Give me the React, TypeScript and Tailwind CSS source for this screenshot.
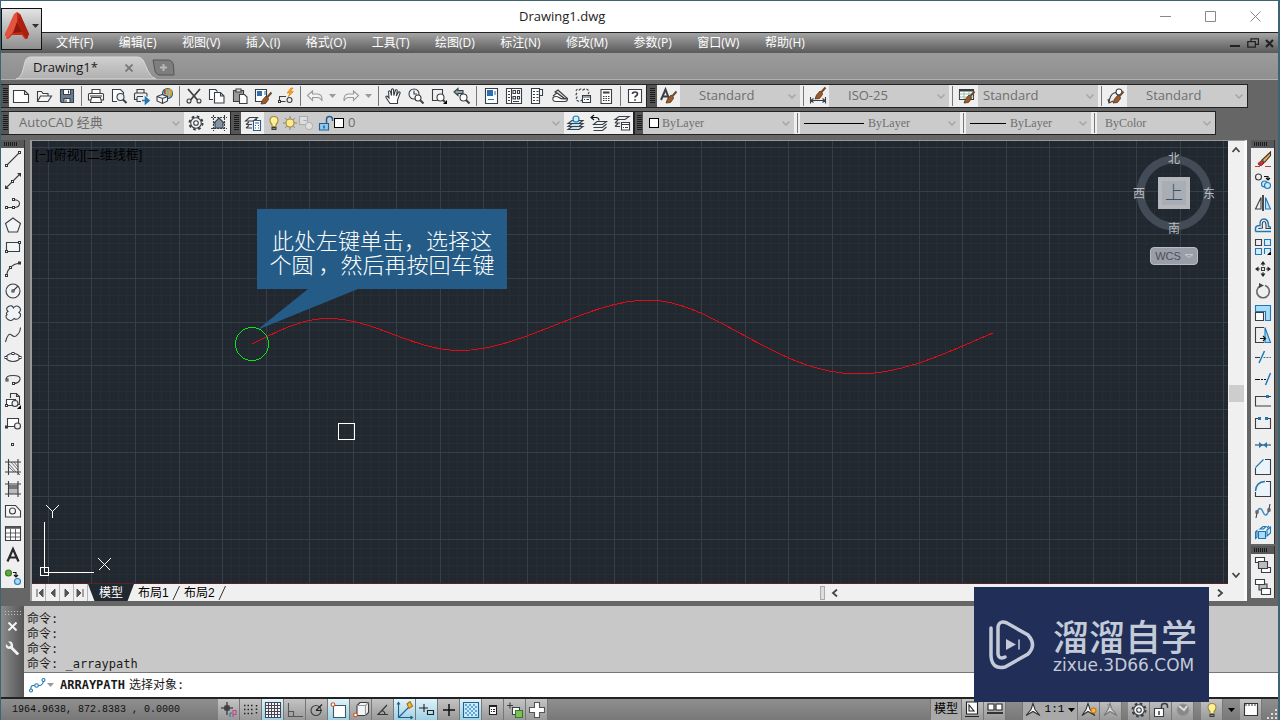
import type { ReactNode } from 'react'

const ui = "font-['Open_Sans','Noto_Sans_CJK_SC',sans-serif]"
const mono = "font-['Liberation_Mono','Noto_Sans_CJK_SC',monospace]"
const serif = "font-['Liberation_Serif','Noto_Sans_CJK_SC',serif]"

const BLUE = '#1f78b4'

// small square handle used on most of the draw icons
function Dot({ x, y, c = '#33373b' }: { x: number; y: number; c?: string }) {
  return <rect x={x - 1} y={y - 1} width="2" height="2" fill="#fff" stroke={c} strokeWidth="1" />
}

const brush = (
  <>
    <path d="M15.500 3.500l-4 4.500" stroke="#6b4a2c" strokeWidth="2" />
    <path d="M12 8.500l-2-1.500-3.500 4-1.500 4 4.500-.5 3-4z" fill="#9a5a2b" stroke="#5b3416" strokeWidth=".8" />
  </>
)

const icons: Record<string, ReactNode> = {
  // standard toolbar
  new: <path d="M.5 2.500h11l4 4v8H.5zM11.500 2.500v4h4" fill="#fff" />,
  open: <path d="M1.500 13V3.500h4l1.500 2h5v2.500M1.500 13.500l3-5.500h11l-3.500 5.500z" fill="#f6f6f6" />,
  save: (
    <>
      <path d="M1.500 1.500h13v13h-12l-1-1z" fill="#6b7c92" />
      <path d="M4.500 1.500h7v5h-7zM5 10.500h6v4H5z" fill="#fff" />
      <path d="M9.500 2.500v3M7 11.500v3" />
    </>
  ),
  print: (
    <>
      <path d="M4 5.500v-4h8v4M3.500 12h-3V6.500q0-1 1-1h13q1 0 1 1V12h-3" fill="#fff" />
      <path d="M3.500 9.500h9l1 5h-11z" fill="#fff" />
      <path d="M2 8h12" />
    </>
  ),
  preview: (
    <>
      <path d="M6 13.500H1.500v-12h8l3 3V6" fill="#fff" />
      <circle cx="9.500" cy="9" r="3.500" fill="#e9f1f6" />
      <path d="M12 11.500l3.500 3.500" strokeWidth="2" />
    </>
  ),
  publish: (
    <>
      <path d="M3 5V1.500h7V5M3 11.500H.5V6q0-1 1-1h10.500q1 0 1 1v2.500M3 8.500h6M3 9v4.500h4" />
      <path d="M8 12.500h6M11.500 9.500l3.500 3-3.500 3z" fill={BLUE} stroke={BLUE} strokeWidth="1.600" />
    </>
  ),
  globe: (
    <>
      <circle cx="10.500" cy="5.500" r="5" fill="#7cc2e8" stroke="#356" />
      <path d="M9 1q4 3 1 7M13 1q3 4 0 7" stroke="#d4a017" strokeWidth="1.800" />
      <path d="M8.500 2q-2 2 0 4" stroke="#c33" strokeWidth="1.500" />
      <path d="M0 8.500l5-2 5.500 2v4.500l-5 2.500L0 13z" fill="#f4f6f8" />
      <path d="M0 8.500l5.500 2 5-2M5.500 10.500v5" />
    </>
  ),
  cut: (
    <>
      <path d="M2 1l9.500 11M14 1L4.500 12" strokeWidth="1.800" />
      <circle cx="3" cy="13" r="2" />
      <circle cx="13" cy="13" r="2" />
    </>
  ),
  copy: (
    <>
      <path d="M4 11.500H.5V1.500h6l2 2" fill="#fff" />
      <path d="M5.500 4.500h6l3.500 3.500v7H5.500zM11.500 4.500v3.500H15" fill="#fff" />
    </>
  ),
  paste: (
    <>
      <path d="M1.500 2.500h10v11h-10z" fill="#9a9a9a" />
      <path d="M4 1h5v3H4z" fill="#ddd" />
      <path d="M7.500 6.500h5l2.500 2.500v6.500H7.500z" fill="#fff" />
    </>
  ),
  match: (
    <>
      <path d="M.5 1.500h11v12H.5z" fill="#fff" />
      <path d="M2 3h5v5H2z" fill="#2f6fae" stroke="none" />
      <path d="M9 4h2M9 6h2" stroke={BLUE} />
      <g transform="translate(1 1)">{brush}</g>
    </>
  ),
  block: (
    <>
      <path d="M1.500 13.500V8.500H8M1.500 13.500h6" />
      <circle cx="11.500" cy="12" r="2.500" />
      <Dot x={1.5} y={13.5} />
      <path d="M13 0l-4 5h3l-2 4 5.500-5.500h-3l2.500-3.500z" fill="#f6a01a" stroke="#e07c00" strokeWidth=".6" />
    </>
  ),
  undo: <path d="M.5 7.500l5-4.500v3h5q5 0 4.500 7-1.500-3.500-4.500-3.500h-5v3z" stroke="#9a9a9a" fill="#f4f4f4" />,
  redo: <path d="M15.500 7.500l-5-4.500v3h-5q-5 0-4.500 7 1.500-3.500 4.500-3.500h5v3z" stroke="#9a9a9a" fill="#f4f4f4" />,
  pan: (
    <path
      d="M5 15.500L1 9.500q-.5-1.500 1-1.500l2 2L3.500 3.500q1-1.500 2 0l1 4V1.500q1-1.200 2 0l.3 6L10.500 2q1.500-.8 1.800.5l-1 5.500L13.500 4q1.300-.5 1.700.7L12.500 12v3.500z"
      fill="#fff"
    />
  ),
  zoomrt: (
    <>
      <circle cx="6" cy="6" r="5" fill="#f2f6f8" />
      <path d="M6 2.500V6h3" />
      <circle cx="10" cy="10" r="3" fill="#fff" />
      <path d="M12.500 12.500l3 3" strokeWidth="2" />
    </>
  ),
  zoomwin: (
    <>
      <path d="M7 12.500H1.500v-11h10V6" />
      <circle cx="9.500" cy="9.500" r="3.500" fill="#fff" />
      <path d="M12 12l2 2" strokeWidth="2" />
      <path d="M16 12v4h-4z" fill="#000" stroke="none" />
    </>
  ),
  zoomprev: (
    <>
      <path d="M0 4l4-3.500v2h5v3H4v2z" fill="#8aa" />
      <circle cx="9.500" cy="9.500" r="3.500" fill="#fff" />
      <path d="M12 12l3.500 3.500" strokeWidth="2" />
    </>
  ),
  props: (
    <>
      <path d="M2.500.5h12v15h-12z" fill="#fff" />
      <path d="M4 2h6v6H4z" fill="#2f6fae" stroke="none" />
      <path d="M12 3v4M5 11.500h6" stroke={BLUE} />
    </>
  ),
  dcenter: (
    <>
      <path d="M.5.5h15v15H.5zM5.500.5v15" fill="#fff" />
      <path d="M2 3.500h2M2 6.500h2M2 9.500h2M2 12.500h2M7 2.500h2.500v3H7zM11.500 2.500h2v3h-2zM7 8.500h2.500v2.500H7zM11.500 8.500h2v2.500h-2zM7 13.500h6" />
    </>
  ),
  palettes: (
    <>
      <path d="M2.500.5h8v15h-8zM10.500 1.500h3v6h-3" fill="#fff" />
      <path d="M4 3.500h2M7.500 3.500h2M4 6.500h2M7.500 6.500h2M4 9.500h2M7.500 9.500h2M4 12.500h2M7.500 12.500h2" />
    </>
  ),
  sheet: (
    <>
      <path d="M3 4l3-2 9 8-2 1z" fill="#d8d8d8" />
      <path d="M1 8l4-3 8 6M1 9.500q3-2 6 0 3 2.500 8.500 1 0 3-2.500 3H4q-4 0-3-4z" fill="#fff" />
    </>
  ),
  markup: (
    <>
      <path d="M1 3q1-3 3-1 2-2 4 0 3-2 5 0 2 2 0 4M2 5q-2 2 0 4-2 3 1 4 2 1 4-1" strokeDasharray="2.500 1.500" />
      <path d="M7.500 7.500h8v7h-8z" fill="#fff" />
      <path d="M7.500 9h8M9 11.500h1M11.500 11.500h2.500" />
    </>
  ),
  calc: (
    <>
      <path d="M3 1.500h10.500v14H3z" fill="#fff" />
      <path d="M5 4.500h6.500" strokeWidth="2" />
      <path d="M5 8.500h1.500M7.500 8.500H9M10 8.500h1.500M5 10.500h1.500M7.500 10.500H9M10 10.500h1.500M5 12.500h1.500M7.500 12.500H9M10 12.500h1.500" />
    </>
  ),
  help: (
    <>
      <path d="M1.500 1.500h13v13h-13z" fill="#fff" />
      <path d="M5.500 6q0-2 2.500-2t2.500 2q0 1-1.500 2-1 .5-1 1.500M8 11.200v1.600" strokeWidth="1.700" />
    </>
  ),
  textstyle: (
    <>
      <path d="M0 12L4.500 1.500 8.500 12M2 8.500h5" strokeWidth="2" />
      {brush}
    </>
  ),
  dimstyle: (
    <>
      <path d="M.5 9v6.500M15.500 9v6.500M1 12.500h14M3.500 10.500l-2.500 2 2.500 2M12.500 10.500l2.500 2-2.500 2" />
      <g transform="translate(0 -4)">{brush}</g>
    </>
  ),
  tablestyle: (
    <>
      <path d="M.5 1.500h14v10H.5z" fill="#fff" />
      <path d="M1 2.500h13" strokeWidth="2" />
      <path d="M.5 6h14M.5 9h14M5 3v8M10 3v8" stroke="#7b9" strokeWidth=".8" />
      {brush}
    </>
  ),
  leaderstyle: (
    <>
      <path d="M1 14.500q1-8 5-9.500l4-1M0 11l1 4 4-2" />
      <circle cx="11" cy="4" r="3" fill="#fff" />
      {brush}
    </>
  ),
  gear: (
    <>
      <circle cx="8" cy="8" r="6.500" strokeWidth="2" strokeDasharray="2.600 2.500" />
      <circle cx="8" cy="8" r="5.300" fill="#f4f4f4" />
      <circle cx="8" cy="8" r="2.300" fill="#fff" />
    </>
  ),
  workspace: (
    <>
      <path d="M2.500 0v16M13.500 0v16M0 2.500h16M0 13.500h16" strokeDasharray="2 1" />
      <path d="M8 3l5 5h-1v5H4V8H3z" fill="#8294a4" />
    </>
  ),
  layers: (
    <>
      <path d="M4.500 2.500h8l-4 3.500h-8zM1 9.500l3-2.500M1 9.500h6M1 13l3-2.500M1 13h6M12 2.500l-1 3" fill="none" />
      <path d="M8.500 5.500h7v10h-7z" fill="#fff" stroke="#2d5c8a" />
      <path d="M10 8h4M10 10.500h1M13 10.500h1M10 13h1M13 13h1" stroke="#2d5c8a" />
    </>
  ),
  bulb: (
    <>
      <path d="M8 1.500q4 0 4 4 0 2-2 4v2H6v-2q-2-2-2-4 0-4 4-4z" fill="#fff19a" stroke="#9b8a3a" />
      <path d="M6 12.500h4v2H6z" fill="#888" />
    </>
  ),
  sun: (
    <>
      <path d="M8 1v14M1 8h14M3 3l10 10M13 3L3 13" stroke="#777" strokeWidth=".8" />
      <circle cx="8" cy="8" r="4" fill="#ffe98a" stroke="#a08a3a" />
    </>
  ),
  freeze: (
    <>
      <path d="M1.500 1.500h8v8h-8zM5.500 5.500h3" stroke="#aaa" fill="#ddd" />
      <circle cx="11" cy="11" r="3.500" stroke="#b5b5b5" fill="#e0e0e0" />
    </>
  ),
  lock: (
    <>
      <path d="M1.500 8.500h9v6.500h-9z" fill="#8ccaf0" stroke="#235f92" />
      <path d="M8.500 8V4.500q0-3 3-3t3 3V6M6 10.500v3" stroke="#235f92" strokeWidth="1.500" />
    </>
  ),
  laycurrent: (
    <>
      <path d="M4 5.500h11l-4 3H0zM4 8.500h11l-4 3H0zM4 11.500h11l-4 3H0z" fill="#bfe2f6" />
      <circle cx="8" cy="4" r="3" stroke={BLUE} fill="#d8eefa" />
    </>
  ),
  layprev: (
    <>
      <path d="M6 6.500h9.500l-4 3H2.500zM15.500 9l-4 3.500h-9M15.500 12l-4 3.500h-9" />
      <path d="M0 2.500h5q3 0 3 3M3 0L0 2.500 3 5" stroke="#111" />
    </>
  ),
  laystate: (
    <>
      <path d="M5 1.500h10l-4 3H1zM1 8l3-3M1 8h5M1 11.500l3-3M1 11.500h5" />
      <path d="M7.500 7.500h8v7.500h-8z" fill="#fff" />
      <path d="M7.500 9.500h8M9 12.500h1M11 12.500h3" />
    </>
  ),
  // draw toolbar
  line: (<><path d="M1.500 14.500l13-13" /><Dot x={1.5} y={14.5} /><Dot x={14.5} y={1.5} /></>),
  xline: (
    <>
      <path d="M1 15L15 1" />
      <path d="M0 16v-4l4 4zM16 0v4l-4-4z" fill="#33373b" stroke="none" />
      <Dot x={7.5} y={8.5} />
    </>
  ),
  pline: (<><path d="M1.500 12.500h8.500q4.500-.5 4.500-4t-6-4" /><Dot x={1.5} y={12.5} /><Dot x={8.5} y={12.5} /><Dot x={8.5} y={4.5} /></>),
  polygon: <path d="M8 1l7.500 5.500-3 8.500h-9l-3-8.500z" fill="#f2f5f7" />,
  rect: (<><path d="M1.500 3.500h13v9h-13z" fill="#f2f5f7" /><Dot x={1.5} y={12.5} /><Dot x={14.5} y={3.5} /></>),
  arc: (<><path d="M1.500 14.500Q3 4 14.500 2" /><Dot x={1.5} y={14.5} /><Dot x={5.5} y={6.5} /><Dot x={14.5} y={2} /></>),
  circle: (<><circle cx="8" cy="8" r="7" fill="#f2f5f7" /><path d="M8 8l5-5" /><Dot x={8} y={8} /></>),
  cloud: <path d="M3 6.500q-3-3 .5-5Q7-.5 8.500 3 11-.5 14 2t0 5.500q3 2 .5 5t-5.500 1q-2.500 3.500-6 1T2 9.500Q.5 8 3 6.500z" fill="#eef4f7" />,
  spline: <path d="M.5 15Q3 5 6.500 8t5.500 0Q15 6 15.500.5" />,
  ellipse: (<><ellipse cx="8" cy="8.500" rx="7" ry="4" fill="#f2f5f7" /><Dot x={1} y={8.5} /><Dot x={15} y={8.5} /><Dot x={8} y={4.5} /></>),
  elarc: (<><path d="M1.500 9Q0 4.500 8 4.500t7 4-7 4" /><Dot x={2} y={9} /><Dot x={8.5} y={12.5} /></>),
  insert: (
    <>
      <path d="M5.500 5V.5h6l3 3v8H12M11.500.5v3h3" />
      <path d="M1.500 6.500h9v6h-9z" fill="#fff" />
      <circle cx="10" cy="10.500" r="3" fill="#e8f0f4" />
      <Dot x={1.5} y={12.5} />
      <path d="M16 12v4h-4z" fill="#000" stroke="none" />
    </>
  ),
  mkblock: (<><path d="M2.500 3.500h11v8h-11z" fill="#fff" /><circle cx="12.500" cy="11" r="3" fill="#eee" /><Dot x={1.5} y={12} /></>),
  point: <Dot x={7.5} y={7.5} />,
  hatch: (<><path d="M3.500 0v16M13 0v16M0 3h16M0 13h16" /><path d="M4 5l7 8M4 8l5 5M6 3l7 8M9 3l4 5M15 16l-3-3" strokeWidth=".7" /></>),
  gradient: (
    <>
      <path d="M4 4h9v4H4z" fill="#777" stroke="none" />
      <path d="M4 8h9v5H4z" fill="#bbb" stroke="none" />
      <path d="M3.500 0v16M13 0v16M0 3h16M0 13h16" />
    </>
  ),
  region: (<><path d="M.5 2.500h10l5 5.500v6H.5z" fill="#f6f6f6" /><circle cx="7.500" cy="8" r="3" /></>),
  table: (
    <>
      <path d="M.5 1.500h15v14H.5z" fill="#fff" />
      <path d="M1 2.500h14" stroke="#555" strokeWidth="2.500" />
      <path d="M.5 8h15M.5 12h15M5.500 4v11.500M10.500 4v11.500" strokeWidth=".8" />
    </>
  ),
  mtext: <path d="M2.500 14.500L8 2l5.500 12.500M4.500 10.500h7" strokeWidth="2.200" stroke="#26292c" />,
  addsel: (
    <>
      <circle cx="3.500" cy="4" r="3" fill="#5fa83c" stroke="#3c7a22" />
      <circle cx="12.500" cy="12.500" r="3" fill="#a8dbf8" stroke="#2b7db8" />
      <path d="M8 3.500h3v4M9 6l2 2 2-2" stroke="#111" />
    </>
  ),
  // modify toolbar
  erase: (
    <>
      <path d="M0 15.500h5M10 15.500h6" stroke="#c33" />
      <path d="M15.500 1L7 9l2.500 2.500 6-7z" fill="#d9b36a" stroke="#4a3013" />
      <path d="M7 9l2.500 2.500L6 14z" fill="#fff" stroke="#555" strokeWidth=".8" />
      <path d="M6.500 9.500l2.500 2.500-2.500 2.500q-3 .5-3.500-2z" fill="#c33" stroke="#711" strokeWidth=".8" />
    </>
  ),
  mcopy: (
    <>
      <circle cx="3.500" cy="4" r="3" />
      <path d="M9 3.500h4v3M11 5l2 2 2-2" stroke="#111" />
      <circle cx="9.500" cy="11" r="3" stroke={BLUE} fill="#cfe9f8" />
      <circle cx="12.500" cy="12.500" r="3" stroke={BLUE} fill="#cfe9f8" />
    </>
  ),
  mirror: (<><path d="M6 2.500V14H.5z" /><path d="M8 0v16" strokeWidth="1.500" stroke="#111" /><path d="M10.500 2.500V14H15.500z" stroke={BLUE} fill="#bfe2f6" /></>),
  offset: (
    <>
      <path d="M.5 14.500v-3q0-3 4.500-3Q4.500 2 9 2t4.500 7.500l2.500 1M.5 14.500H16" stroke={BLUE} strokeWidth="1.500" />
      <path d="M3.500 12q0-1 4-1Q6.500 4.500 9 4.500t2 7H16" />
    </>
  ),
  array: (
    <>
      <path d="M.5.500h6v6h-6z" />
      <path d="M9.500.500h6v6h-6zM.500 9.500h6v6h-6zM9.500 15V9.500h6V12" stroke={BLUE} fill="#d4ecf9" />
      <path d="M16 12v4h-4z" fill="#000" stroke="none" />
    </>
  ),
  move: (
    <>
      <path d="M6.500 6.500h3v3h-3z" />
      <path d="M8 0l2.500 3.500h-5zM8 16l2.500-3.500h-5zM0 8l3.500-2.500v5zM16 8l-3.500-2.500v5z" fill="#222" stroke="none" />
      <path d="M8 3v2M8 11v2M3 8h2M11 8h2" />
    </>
  ),
  rotate: (<><path d="M10 2.500a6.300 6.300 0 1 1-5 .5" stroke="#666" strokeWidth="1.600" /><path d="M4 0l5 2.500L4 5z" fill="#444" stroke="none" /></>),
  scale: (<><path d="M.5.500h15v15h-5V6.500H.500z" fill="#a8dcf6" stroke={BLUE} /><path d="M.5 7.500h8v8h-8z" fill="#fff" /></>),
  stretch: (
    <>
      <path d="M9 .500H.500v15H9" />
      <path d="M10 .500l5.500 15H10z" fill="#a8dcf6" stroke={BLUE} />
      <path d="M5 11.500h5M8 9l2.500 2.500L8 14" stroke="#111" />
    </>
  ),
  trim: (<><path d="M0 8.500h5" /><path d="M4 14L9.500 2" stroke={BLUE} strokeWidth="1.500" /><path d="M8.500 8.500H16" strokeDasharray="2 1" stroke={BLUE} /></>),
  extend: (<><path d="M0 8.500h5M6 8.500h2M9 8.500h2" stroke="#111" /><path d="M10.500 14l5-12" stroke={BLUE} strokeWidth="1.500" /></>),
  breakpt: (<><path d="M11 3.500H.5v9.500H16M14 3.500h2" /><path d="M11 2h3v3h-3z" fill={BLUE} stroke="none" /></>),
  breakit: (<><path d="M3 3.500H.5v10h15v-10H13" /><path d="M3 2h3v3H3zM10 2h3v3h-3z" fill={BLUE} stroke="none" /></>),
  join: (<><path d="M0 8h16" /><path d="M4 5l4 3-4 3zM12 5L8 8l4 3z" fill={BLUE} stroke="none" /></>),
  chamfer: (<><path d="M10 .500h5.500v15H.500V9" fill="#eaf4fa" /><path d="M.500 8.500l8-8" stroke={BLUE} /></>),
  fillet: (<><path d="M11 .500h4.500v15H.500V11" fill="#eaf4fa" /><path d="M.500 10Q1 1 10 .500" stroke={BLUE} strokeWidth="1.500" /></>),
  blend: (<><path d="M1 15l1-5M15 1l-1 5" /><path d="M2 9q3-7 6 0t6-2" stroke="#3f8cc4" strokeWidth="1.500" /><Dot x={2} y={9} /><Dot x={14} y={7} /></>),
  explode: (
    <>
      <path d="M3.500 6.500h7v7h-7z" fill="#a8dcf6" stroke={BLUE} />
      <path d="M5 4l3-2.500h3L8.500 4zM12 5l3.500-3v6L12 11zM.500 7v6.500L2 12V5.500zM12 3l2-2" fill="#d4ecf9" stroke={BLUE} />
    </>
  ),
  front: (<><path d="M.500 .500h9v5h-9zM6.500 10.500h9v5h-9z" fill="#fff" /><path d="M3.500 4.500h9v7h-9z" fill="#bcbcbc" /></>),
  back: (<><path d="M4 5h8v6H4z" fill="#bcbcbc" /><path d="M.500 .500h9v5h-9zM6.500 9.500h9v6h-9z" fill="#fff" /></>),
  // status bar
  infer: (<><path d="M0 6h12M6 0v13M4 4h4v4H4z" stroke="#222" /><path d="M12 8.500h3v4h-3zM12 12v3" stroke="#c2457c" /><path d="M9 11v4M9 11h2" stroke={BLUE} /></>),
  snap: <path d="M1 3.500h10M1 7.500h10M1 11.500h10M13.500 3v10" strokeDasharray="1.500 2" stroke="#222" strokeWidth="1.500" />,
  grid: <path d="M.500.500h15v15H.500zM3.500.500v15M6.500.500v15M9.500.500v15M12.500.500v15M.500 3.500h15M.500 6.500h15M.500 9.500h15M.500 12.500h15" stroke="#445" fill="#fff" />,
  ortho: <path d="M1.500 1v13.500H16M1.500 9.500h5v5" stroke="#555" />,
  polar: (<><circle cx="7" cy="8.500" r="5" /><path d="M7 8.500h6M7 8.500l6-6" stroke="#222" /></>),
  osnap: (<><path d="M2.500 3.500h12v12h-12z" fill="#fff" stroke="#456" /><circle cx="2" cy="2.500" r="1.800" fill="#fff" stroke="#d9531e" /></>),
  osnap3d: (<><path d="M4 3.500L7 .500h8.500v10l-3 3H4z" fill="#f4f4f4" /><path d="M12.500 3.500v10M4 3.500h8.500l3-3" stroke="#999" /><circle cx="2.500" cy="13" r="1.800" fill="#fff" stroke="#d9531e" /></>),
  otrack: <path d="M12 3L3 12.500h10M7 8.500q3 1 3 4" stroke="#333" />,
  ducs: (<><path d="M1.500 0v15.500H16M2 15L12 5M0 2.500l1.500-2 1.500 2M13.500 14l2 1.500-2 1.500" stroke="#1f5f8a" /><path d="M10 2l3-2.500 2.500 4.500-3.500 2.500z" fill="#f3b53c" stroke="#a67314" /></>),
  dyn: <path d="M0 6h9M5 2v8M8.500 8.500h6v4h-6z" stroke="#222" />,
  lwt: <path d="M2 8h12M8 2v12" stroke="#111" strokeWidth="1.500" />,
  tpy: (<><path d="M.500.500h15v15H.500z" fill="#cfeaf8" stroke="#235f92" /><path d="M2 3h12M2 7h12M2 11h12" stroke="#5fa9dc" strokeWidth="2" strokeDasharray="2 2" /><path d="M4 5h10M4 9h10M4 13h10" stroke="#5fa9dc" strokeWidth="2" strokeDasharray="2 2" /></>),
  qp: (<><path d="M4.500 3.500h7v9h-7z" fill="#fff" stroke="#222" /><path d="M4.500 4.500h7M6 7.500h1M8 7.500h2M6 9.500h1M8 9.500h2" stroke="#222" /></>),
  sc: (<><path d="M0 3.500h6M3 .500v6" /><path d="M5.500 5.500h7v7h-7z" fill="#fff" /><path d="M8.500 8.500h7v7h-7z" fill="#7cc05c" stroke="#3c7a22" /></>),
  am: <path d="M5.500.500h5v5h5v5h-5v5h-5v-5h-5v-5h5z" fill="#fff" stroke="#555" />,
  modelspace: (<><path d="M1.500 0h11v12h-11z" fill="#fff" stroke="#222" /><path d="M4 3v6h5zM0 14.500h14" stroke="#222" /></>),
  layoutspace: (<><path d="M1 2h6v6H1zM9 2h6v6H9z" fill="#fff" stroke="#222" /><path d="M0 11h16" stroke="#333" strokeWidth="2" /></>),
  anno: <path d="M8 1.500l2 6 5 6-7-4-7 4 5-6z" fill="#fff" stroke="#333" />,
  annovis: (<><path d="M7 1.500l2 6 5 6-7-4-6 4 4-6z" fill="#fff" stroke="#333" /><circle cx="12.500" cy="8.500" r="2.500" fill="#ffb347" stroke="#c97a10" /></>),
  annoauto: (<><path d="M7 1.500l2 6 5 6-7-4-6 4 4-6z" fill="#ddd" stroke="#777" /><path d="M4 2l9 9" stroke="#999" /></>),
  unlock: (<><path d="M1.500 6.500h9v8h-9z" fill="#fff" /><path d="M8.500 6V4q0-2.500 3-2.500t3 2.500v2M6 9v4" strokeWidth="1.500" /></>),
  hw: (<><circle cx="8" cy="8" r="6" fill="#888" stroke="#999" /><path d="M4 4l5 4 3-4" stroke="#ddd" strokeWidth="2" /></>),
  clean: (<><path d="M1.500 1.500h13v12h-13z" fill="#fff" stroke="#333" /><path d="M2 3h12" stroke="#333" strokeDasharray="2 1" /></>),
  wrench: <path d="M3 1.500L5.500 4v2L3.500 6.500 1 4q-1 4 2.500 5l2-.3 6 6q2 1 2.500-1.500l-6-6Q8.500 3 6 1.500z" fill="#f2f2f2" stroke="none" transform="translate(0 -1)" />,
  arraypath: (
    <>
      <path d="M2 14q-1-6 3-5.500t5 0q4 0 4.500-5" stroke={BLUE} />
      <circle cx="2" cy="13.500" r="1.500" fill="#fff" stroke={BLUE} />
      <circle cx="7.500" cy="8.500" r="1.800" fill="#fff" stroke={BLUE} />
      <circle cx="14.500" cy="3" r="1.500" fill="#fff" stroke={BLUE} />
    </>
  ),
}

function Icon({ name }: { name: string }) {
  return (
    <svg viewBox="0 0 16 16" className="h-4 w-4 shrink-0 overflow-visible" fill="none" stroke="#3a3f45" strokeWidth="1.100">
      {icons[name]}
    </svg>
  )
}

function ToolButton({ name }: { name: string }) {
  return (
    <button aria-label={name} className="flex h-[22px] w-[23px] shrink-0 items-center justify-center bg-[#efefef]">
      <Icon name={name} />
    </button>
  )
}

function Caret({ className = 'text-[#999]' }: { className?: string }) {
  return (
    <svg viewBox="0 0 7 4" className={`h-1 w-[7px] shrink-0 ${className}`}>
      <path d="M0 0h7L3.500 4z" fill="currentColor" />
    </svg>
  )
}

function Sep() {
  return (
    <div className="flex h-[22px] w-[6px] shrink-0 justify-center bg-[#efefef] py-px">
      <div className="w-px bg-[#777]" />
    </div>
  )
}

function Grip({ className = 'w-2' }: { className?: string }) {
  return (
    <div className={`flex h-[22px] shrink-0 items-center justify-center bg-[#555] ${className}`}>
      <div className="h-4 w-[5px] bg-[linear-gradient(#1a1a1a_50%,transparent_50%)] bg-[length:2px_2px]" />
    </div>
  )
}

function TopGrip() {
  return (
    <div className="flex h-2 items-center bg-[#585858] px-[3px]">
      <div className="h-1 w-3.5 bg-[linear-gradient(90deg,#1a1a1a_50%,transparent_50%)] bg-[length:2px_2px]" />
    </div>
  )
}

interface ComboProps {
  label: string
  value: string
  className: string
  pad?: string
  font?: string
  children?: ReactNode
}

function Combo({ label, value, className, pad = 'pl-2', font = `${ui} text-[13px]`, children }: ComboProps) {
  return (
    <div className={`relative flex h-[22px] shrink-0 items-center bg-[#cbcbcb] ${pad} ${className}`}>
      {children}
      <select aria-label={label} className={`h-full min-w-0 flex-1 appearance-none bg-transparent text-[#6e6e6e] outline-none ${font}`}>
        <option>{value}</option>
      </select>
      <svg viewBox="0 0 8 5" className="pointer-events-none absolute right-1 h-[5px] w-2" fill="none" stroke="#a6a6a6" strokeWidth="1.500">
        <path d="M.5.500L4 4 7.500.500" />
      </svg>
    </div>
  )
}

const menus = ['文件(F)', '编辑(E)', '视图(V)', '插入(I)', '格式(O)', '工具(T)', '绘图(D)', '标注(N)', '修改(M)', '参数(P)', '窗口(W)', '帮助(H)']

const standard = [
  ['new', 'open', 'save'],
  ['print', 'preview', 'publish', 'globe'],
  ['cut', 'copy', 'paste', 'match', 'block'],
  ['undo', 'v', 'redo', 'v'],
  ['pan', 'zoomrt', 'zoomwin', 'zoomprev'],
  ['props', 'dcenter', 'palettes', 'sheet', 'markup', 'calc'],
  ['help'],
]

const styles = [
  { icon: 'textstyle', value: 'Standard', pad: 'pl-[19px]' },
  { icon: 'dimstyle', value: 'ISO-25', pad: 'pl-[19px]' },
  { icon: 'tablestyle', value: 'Standard', pad: 'pl-[5px]' },
  { icon: 'leaderstyle', value: 'Standard', pad: 'pl-[19px]' },
]

const drawTools = ['line', 'xline', 'pline', 'polygon', 'rect', 'arc', 'circle', 'cloud', 'spline', 'ellipse', 'elarc', 'insert', 'mkblock', 'point', 'hatch', 'gradient', 'region', 'table', 'mtext', 'addsel']
const modifyTools = ['erase', 'mcopy', 'mirror', 'offset', 'array', 'move', 'rotate', 'scale', 'stretch', 'trim', 'extend', 'breakpt', 'breakit', 'join', 'chamfer', 'fillet', 'blend', 'explode']

const modes = ['infer', 'snap', 'grid', 'ortho', 'polar', 'osnap', 'osnap3d', 'otrack', 'ducs', 'dyn', 'lwt', 'tpy', 'qp', 'sc', 'am']
const activeModes = ['grid', 'osnap', 'ducs', 'dyn', 'tpy']

const history = ['命令:', '命令:', '命令:', '命令: _arraypath']

function TitleBar() {
  return (
    <header className="relative flex h-8 shrink-0 items-center border-t border-[#3d6472] bg-white">
      <h1 className={`flex-1 pl-[518px] text-[13px] text-[#222] ${ui}`}>Drawing1.dwg</h1>
      <div className="flex text-[#888]">
        <button aria-label="Minimize" className="flex w-[45px] items-center justify-center">
          <svg viewBox="0 0 11 11" className="h-[11px] w-[11px]" stroke="currentColor"><path d="M0 5.500h11" /></svg>
        </button>
        <button aria-label="Maximize" className="flex w-[45px] items-center justify-center">
          <svg viewBox="0 0 11 11" className="h-[11px] w-[11px]" stroke="currentColor" fill="none"><path d="M.500.500h10v10H.500z" /></svg>
        </button>
        <button aria-label="Close" className="flex w-[45px] items-center justify-center">
          <svg viewBox="0 0 11 11" className="h-[11px] w-[11px]" stroke="currentColor"><path d="M.500.500l10 10M10.500.500l-10 10" /></svg>
        </button>
      </div>
      <button aria-label="Application menu" className="absolute top-[7px] left-0 z-10 flex h-[42px] w-[41px] items-start justify-center gap-0.5 border border-[#111] bg-linear-to-b from-[#e4e4e4] to-[#8f8f8f] pt-[3px]">
        <svg viewBox="0 0 26 28" className="h-7 w-[26px]">
          <path d="M13 0l3 2 9 20-2 5h-2l-3-4H8l-4 4H3l-2-5z" fill="#c32a16" />
          <path d="M13 0l-3 2L1 22l2 5 7-8 3-9z" fill="#e4543c" />
          <path d="M13 10l5 10-9 1z" fill="#8f170b" />
          <path d="M16 2l9 20-2 5-5-7-4-11z" fill="#a9200f" />
        </svg>
        <span className="flex h-7 items-center"><Caret className="text-[#333]" /></span>
      </button>
    </header>
  )
}

function MenuBar() {
  return (
    <nav className={`flex h-[21px] shrink-0 items-center border-t border-[#222] bg-linear-to-b from-[#a5a5a5] to-[#5a5a5a] pr-1 pl-[55px] text-xs text-white ${ui}`}>
      <div className="flex w-[749px] justify-between">
        {menus.map((m) => (
          <a key={m} href="#" className="leading-5 whitespace-nowrap">{m}</a>
        ))}
      </div>
      <div className="ml-auto flex items-center gap-1.5">
        <button aria-label="Minimize drawing">
          <svg viewBox="0 0 11 10" className="h-2.5 w-[11px]" stroke="#222" strokeWidth="2"><path d="M0 8h10" /></svg>
        </button>
        <button aria-label="Restore drawing">
          <svg viewBox="0 0 12 10" className="h-2.5 w-3" stroke="#222" fill="none" strokeWidth="1.300"><path d="M4 3V.800h7.500v5.500H8.500M.800 3.700h7.500v5.500H.800z" /></svg>
        </button>
        <button aria-label="Close drawing">
          <svg viewBox="0 0 9 9" className="h-[9px] w-[9px]" stroke="#222" strokeWidth="2.200"><path d="M1 1l7 7M8 1L1 8" /></svg>
        </button>
      </div>
    </nav>
  )
}

function FileTabs() {
  return (
    <div className="flex h-[27px] shrink-0 items-end border-b border-[#b0b0b0] bg-linear-to-b from-[#9b9b9b] to-[#8f8f8f] pl-[15px]">
      <div className="relative flex h-[23px] w-36 items-center">
        <svg viewBox="0 0 144 23" className="absolute inset-0 h-full w-full">
          <defs>
            <linearGradient id="tab" x1="0" y1="0" x2="0" y2="1">
              <stop offset="0" stopColor="#cfcfcf" />
              <stop offset="1" stopColor="#b0b0b0" />
            </linearGradient>
          </defs>
          <path d="M0 23q5-1 7-9l2-8q1-5 6-5h106q5 0 7 5l4 9q3 7 8 8z" fill="url(#tab)" stroke="#d8d8d8" />
        </svg>
        <button className={`relative flex-1 pl-[17px] text-left text-[13px] text-[#1a1a1a] ${ui}`}>Drawing1*</button>
        <button aria-label="Close tab" className="relative mr-[27px]">
          <svg viewBox="0 0 8 8" className="h-2 w-2" stroke="#777" strokeWidth="1.800"><path d="M.500.500l7 7M7.500.500l-7 7" /></svg>
        </button>
      </div>
      <button aria-label="New tab" className="mb-[3px] -ml-2">
        <svg viewBox="0 0 23 17" className="h-[17px] w-[23px]">
          <path d="M1 1h15q5 0 5.500 6l.5 9H8Q3 16 2.500 9z" fill="#7e7e7e" stroke="#555" />
          <path d="M11.500 5v7M8 8.500h7" stroke="#b8b8b8" strokeWidth="2" />
        </svg>
      </button>
    </div>
  )
}

function Toolbars() {
  return (
    <div className="flex shrink-0 flex-col gap-[3px] bg-[#666] pt-1 pb-[5px]">
      <div className="flex">
        <div className="flex border-y border-[#222]">
          <Grip />
          {standard.map((group, gi) => (
            <div key={gi} className="flex">
              {gi > 0 && <Sep />}
              {group.map((name, i) =>
                name === 'v' ? (
                  <button key={i} aria-label="More" className="flex h-[22px] w-[13px] items-center justify-center bg-[#efefef]">
                    <Caret />
                  </button>
                ) : (
                  <ToolButton key={name} name={name} />
                ),
              )}
            </div>
          ))}
        </div>
        <div className="flex border border-[#222]">
          <Grip className="w-2.5" />
          {styles.map((s, i) => (
            <div key={s.icon} className="flex">
              {i > 0 && <Sep />}
              <ToolButton name={s.icon} />
              <Combo label={s.icon} value={s.value} className="w-[120px]" pad={s.pad} />
            </div>
          ))}
        </div>
      </div>
      <div className="flex">
        <div className="flex border-y border-[#222]">
          <Grip />
          <Combo label="Workspace" value="AutoCAD 经典" className="w-[175px]" pad="pl-2.5" />
          <ToolButton name="gear" />
          <ToolButton name="workspace" />
        </div>
        <div className="flex border border-[#222]">
          <Grip className="w-2.5" />
          <ToolButton name="layers" />
          <Combo label="Layer" value="0" className="w-[300px]" pad="pl-0.5">
            <Icon name="bulb" />
            <Icon name="sun" />
            <Icon name="freeze" />
            <span className="w-1" />
            <Icon name="lock" />
            <span className="mr-1 h-2.5 w-2.5 border border-black bg-white" />
          </Combo>
          <ToolButton name="laycurrent" />
          <ToolButton name="layprev" />
          <ToolButton name="laystate" />
        </div>
        <div className="flex border border-[#222]">
          <Grip />
          <Combo label="Color" value="ByLayer" className="w-[151px]" pad="pl-1.5" font={`${serif} text-xs`}>
            <span className="mr-[3px] h-2.5 w-2.5 border border-black bg-white" />
          </Combo>
          <Sep />
          <Combo label="Linetype" value="ByLayer" className="w-40" pad="pl-1" font={`${serif} text-xs`}>
            <span className="mr-1 h-px w-[60px] bg-black" />
          </Combo>
          <Sep />
          <Combo label="Lineweight" value="ByLayer" className="w-[125px]" pad="pl-1" font={`${serif} text-xs`}>
            <span className="mr-1 h-px w-9 bg-black" />
          </Combo>
          <Sep />
          <Combo label="Plot style" value="ByColor" className="w-[118px]" font={`${serif} text-xs`} />
        </div>
      </div>
    </div>
  )
}

function gridPath(step: number, w: number, h: number) {
  let d = ''
  const x0 = 16.4 % step
  const y0 = 50.4 % step
  for (let x = x0; x < w; x += step) d += `M${Math.floor(x) + 0.5} 0V${h}`
  for (let y = y0; y < h; y += step) d += `M0 ${Math.floor(y) + 0.5}H${w}`
  return d
}

function Drawing() {
  return (
    <div className="relative min-w-0 flex-1 overflow-hidden border-b border-[#5b2228] bg-[#212830]">
      <svg className="absolute inset-0 h-full w-full" fill="none" shapeRendering="crispEdges">
        <path d={gridPath(8.708, 2560, 1440)} stroke="#262d35" />
        <path d={gridPath(43.54, 2560, 1440)} stroke="#363f48" />
        <g transform="translate(-32 -141)">
          <path
            d="M252 344C280 330 302 318.500 328 318.500C375 318.500 412 350.500 460 350.500C522 350.500 588 300 648 300C715 300 775 374 858 374C905 374 950 351 993 333"
            stroke="#e00b14"
          />
          <circle cx="252" cy="344" r="16.500" stroke="#12e01c" />
          <path d="M338.500 423.500h16v16h-16z" stroke="#fff" />
          <g stroke="#fff">
            <path d="M40.500 567.500h8v8h-8zM44.500 522v50M44 572.500h50" />
            <path d="M46.500 505.500l6 6 6-6M52.500 511v7M98.500 558.500l12 12M110.500 558.500l-12 12" />
          </g>
        </g>
      </svg>

      <p className="absolute top-[6px] left-[3px] font-['Liberation_Sans','Noto_Sans_CJK_SC',sans-serif] text-[13px] leading-4 text-black">[−][俯视][二维线框]</p>

      <div className="absolute top-[68px] left-[225px] text-white">
        <p className="h-20 w-[250px] bg-[#245c87] pt-[18px] text-center font-['Noto_Sans_CJK_SC',sans-serif] text-[22px] leading-6 font-light whitespace-pre-line">
          {'此处左键单击，选择这\n个圆 ，然后再按回车键'}
        </p>
        <svg viewBox="0 0 250 41" className="h-[41px] w-[250px]">
          <path d="M51 0h50L0 41z" fill="#245c87" />
        </svg>
      </div>

      <div className="absolute top-[9px] right-4 flex w-[76px] flex-col items-center">
        <svg viewBox="0 0 76 86" className="h-[86px] w-[76px] overflow-visible font-['Noto_Sans_CJK_SC',sans-serif]">
          <circle cx="38" cy="43" r="33.500" fill="none" stroke="#434b56" strokeWidth="8" />
          <path d="M22 27h32v32H22z" fill="#b4b8bc" />
          <path d="M26 31h24v24H26z" fill="#a9aeb4" />
          <g fontSize="12" fill="#b9bdc2" textAnchor="middle">
            <text x="38" y="13">北</text>
            <text x="38" y="83">南</text>
            <text x="3" y="48">西</text>
            <text x="73" y="48">东</text>
            <text x="38" y="49" fontSize="18" fontWeight="300" fill="#3c536c">上</text>
          </g>
        </svg>
        <button className="mt-[11px] flex h-[18px] w-12 items-center justify-center gap-1 rounded border border-[#b9bcc6] bg-[#9a9ea9] font-['Liberation_Sans',sans-serif] text-[11px] text-[#4a4e5a]">
          WCS
          <svg viewBox="0 0 8 4" className="h-1 w-2" fill="none" stroke="#c4c7cf"><path d="M0 .500h8L4 3.500z" /></svg>
        </button>
      </div>
    </div>
  )
}

function Chevron({ d }: { d: string }) {
  return (
    <svg viewBox="0 0 8 8" className="h-2 w-2" fill="none" stroke="#444" strokeWidth="1.800"><path d={d} /></svg>
  )
}

function VScroll() {
  return (
    <div className="flex w-4 shrink-0 flex-col items-center justify-between bg-[#f0f0f0] py-[5px]">
      <button aria-label="Scroll up"><Chevron d="M.500 6L4 2l3.500 4" /></button>
      <div className="mt-[62px] h-[17px] w-[15px] bg-[#cdcdcd]" />
      <button aria-label="Scroll down"><Chevron d="M.500 2L4 6l3.500-4" /></button>
    </div>
  )
}

function LayoutTabs() {
  return (
    <div className="flex h-[17px] shrink-0 items-stretch bg-[#f0f0f0] font-['Liberation_Sans','Noto_Sans_CJK_SC',sans-serif] text-xs">
      <div className="flex">
        {['M3 1v8M9 1L5 5l4 4z', 'M7 1L3 5l4 4z', 'M3 1l4 4-4 4z', 'M7 1v8M1 1l4 4-4 4z'].map((d) => (
          <button key={d} aria-label="Browse layouts" className="flex w-3.5 items-center justify-center border-r border-[#b5b5b5]">
            <svg viewBox="0 0 10 10" className="h-2.5 w-2.5" fill="#555" stroke="#555"><path d={d} /></svg>
          </button>
        ))}
      </div>
      <button className="w-[46px] bg-[#212830] leading-4 text-white [clip-path:polygon(0_0,100%_0,86%_100%,14%_100%)]">模型</button>
      {['布局1', '布局2'].map((t) => (
        <button key={t} className="flex w-[46px] items-center justify-between pl-1 leading-4 text-black">
          {t}
          <svg viewBox="0 0 8 14" className="h-3.5 w-2" stroke="#333"><path d="M7.500 0L1 14" /></svg>
        </button>
      ))}
      <div className="ml-auto flex w-[35%] items-center">
        <div className="h-3.5 w-[5px] border border-[#aaa] bg-[#ddd]" />
        <button aria-label="Scroll left" className="ml-1.5"><Chevron d="M6 .500L2 4l4 3.500" /></button>
        <button aria-label="Scroll right" className="mr-5 ml-auto"><Chevron d="M2 .500L6 4 2 7.500" /></button>
      </div>
    </div>
  )
}

function SideBar({ tools }: { tools: string[] }) {
  return (
    <div className="flex flex-col border-r border-[#333] bg-[#efefef]">
      <TopGrip />
      {tools.map((t) => (
        <ToolButton key={t} name={t} />
      ))}
    </div>
  )
}

function CommandLine() {
  return (
    <section className="flex h-[91px] shrink-0">
      <div className="flex w-[23px] shrink-0 flex-col items-center bg-linear-to-r from-[#8c8c8c] to-[#555] pt-1">
        <div className="h-1.5 w-[17px] bg-[radial-gradient(#c4c4c4_40%,transparent_45%)] bg-[length:3px_3px]" />
        <button aria-label="Close command line" className="mt-1.5">
          <svg viewBox="0 0 9 9" className="h-[9px] w-[9px]" stroke="#f4f4f4" strokeWidth="2"><path d="M.500.500l8 8M8.500.500l-8 8" /></svg>
        </button>
        <button aria-label="Customize" className="mt-2.5"><Icon name="wrench" /></button>
      </div>
      <div className="flex min-w-0 flex-1 flex-col font-['DejaVu_Sans_Mono','Noto_Sans_CJK_SC',monospace] text-xs text-[#1a1a1a]">
        <div className="flex-1 border-b border-[#777] bg-[#c8c8c8] pt-1.5 pl-[3px]">
          {history.map((h, i) => (
            <p key={i} className="leading-[15px]">{h}</p>
          ))}
        </div>
        <div className="flex h-6 items-center bg-white pl-[5px]">
          <Icon name="arraypath" />
          <span className="mr-1.5 ml-0.5"><Caret /></span>
          <label htmlFor="cmd" className="flex gap-1"><b>ARRAYPATH</b>选择对象:</label>
          <input id="cmd" className="min-w-0 flex-1 bg-transparent pl-1 outline-none" />
        </div>
      </div>
    </section>
  )
}

function StatusButton({ name, active }: { name: string; active?: boolean }) {
  return (
    <button
      aria-label={name}
      className={`flex w-[22px] shrink-0 items-center justify-center border-r border-[#777] ${active ? 'bg-linear-to-b from-[#dff3fa] to-[#9fd0e2]' : 'bg-linear-to-b from-[#c4c4c4] to-[#999]'}`}
    >
      <Icon name={name} />
    </button>
  )
}

function StatusBar() {
  return (
    <footer className={`flex h-[23px] shrink-0 items-stretch border-t-2 border-[#222] bg-linear-to-b from-[#8f8f8f] to-[#787878] ${mono}`}>
      <p className="w-[217px] shrink-0 pl-[11px] text-[10px] leading-[22px] whitespace-pre text-[#111]">1964.9638, 872.8383 , 0.0000</p>
      {modes.map((m) => (
        <StatusButton key={m} name={m} active={activeModes.includes(m)} />
      ))}
      <div className="ml-auto flex items-stretch">
        <button className="w-8 border-x border-[#777] bg-[#a9a9a9] text-xs leading-5 text-black">模型</button>
        <StatusButton name="modelspace" />
        <StatusButton name="layoutspace" />
        <span className="w-4" />
        <button className="flex w-[56px] items-center justify-center gap-1 border-x border-[#777] bg-[#a9a9a9] text-[11px] text-black">
          <Icon name="anno" />
          1:1
          <Caret className="text-black" />
        </button>
        <StatusButton name="annovis" />
        <StatusButton name="annoauto" />
        <span className="w-1.5" />
        <StatusButton name="gear" />
        <StatusButton name="unlock" />
        <StatusButton name="hw" />
        <span className="w-[7px]" />
        <StatusButton name="bulb" />
        <button aria-label="Status bar menu" className="flex w-[17px] items-center justify-center"><Caret className="text-black" /></button>
        <StatusButton name="clean" />
        <span className="flex w-4 items-end justify-end">
          <svg viewBox="0 0 12 12" className="h-3 w-3" fill="#ddd"><path d="M9 1h2v2H9zM9 5h2v2H9zM9 9h2v2H9zM5 5h2v2H5zM5 9h2v2H5zM1 9h2v2H1z" /></svg>
        </span>
      </div>
    </footer>
  )
}

function Watermark() {
  return (
    <aside className="absolute right-[69px] bottom-[18px] flex h-[115px] w-[235px] items-center gap-4 bg-[#212e57] pl-[13px] text-[#c3cbd8]">
      <svg viewBox="0 0 50 50" className="h-[50px] w-[50px] shrink-0" fill="none" stroke="#c3cbd8" strokeWidth="3.500" strokeLinecap="round">
        <path d="M4 8v28q1 14 14 11l23-13q9-9 0-19L20 3q-8-3-9 4v27q1 6 7 3" />
        <path d="M19 19l10 5.500L19 30z" fill="#c3cbd8" stroke="none" />
        <path d="M32 20v9" strokeWidth="1.500" />
      </svg>
      <div>
        <p className="font-['Noto_Sans_CJK_SC',sans-serif] text-4xl leading-10 font-medium">溜溜自学</p>
        <p className="font-['DejaVu_Sans',sans-serif] text-[17px] leading-5">zixue.3D66.COM</p>
      </div>
    </aside>
  )
}

export default function App() {
  return (
    <div className="relative flex min-h-screen flex-col overflow-hidden border-r-2 border-l border-[#3d6472] bg-[#666]">
      <TitleBar />
      <MenuBar />
      <FileTabs />
      <Toolbars />
      <main className="flex flex-1 items-start gap-1 pr-[3px]">
        <SideBar tools={drawTools} />
        <div className="mb-[5px] ml-px flex min-w-0 flex-1 flex-col self-stretch border-t border-r-[3px] border-l-2 border-t-[#999] border-r-[#fafafa] border-l-[#999]">
          <div className="flex flex-1">
            <Drawing />
            <VScroll />
          </div>
          <LayoutTabs />
        </div>
        <div className="flex flex-col gap-0.5">
          <SideBar tools={modifyTools} />
          <SideBar tools={['front', 'back']} />
        </div>
      </main>
      <CommandLine />
      <StatusBar />
      <Watermark />
    </div>
  )
}
